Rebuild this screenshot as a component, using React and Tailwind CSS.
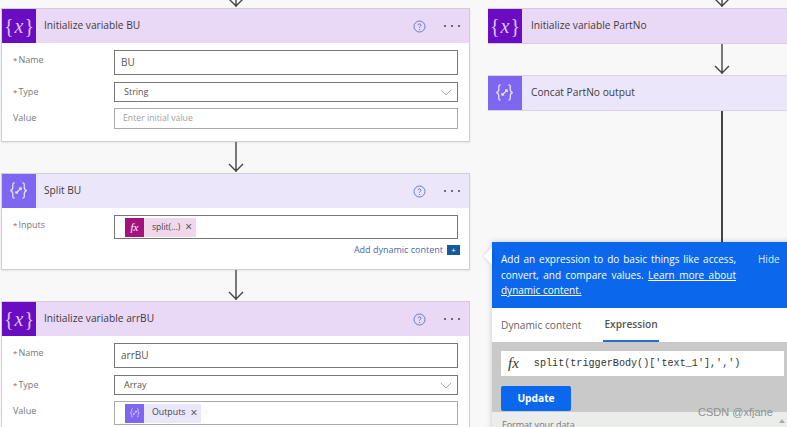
const F = { fontFamily: '"Open Sans", "Noto Sans", sans-serif' };
const SERIF = { fontFamily: '"Liberation Serif", serif' };

function Arrow({ h }) {
  return (
    <svg width="20" height={h} viewBox={`0 0 20 ${h}`} className="block mx-auto shrink-0">
      <path d={`M10 0V${h - 1}M3 ${h - 9}L10 ${h - 2}L17 ${h - 9}`} fill="none" stroke="#444" strokeWidth="1.4" />
    </svg>
  );
}

function VarIcon() {
  return (
    <div className="w-[34px] h-[34px] shrink-0 bg-[#6a0cc2] flex items-center justify-center">
      <span className="text-[#dcc6f2] text-[20px] leading-none" style={SERIF}>
        {"{"}<span className="italic mx-[1px]">x</span>{"}"}
      </span>
    </div>
  );
}

function ComposeIcon({ size = 34 }) {
  const s = size;
  return (
    <div className="shrink-0 bg-[#7f66f0] flex items-center justify-center" style={{ width: s, height: s }}>
      <svg width={s * 0.62} height={s * 0.62} viewBox="0 0 22 22" fill="none" stroke="#e4dcfb" strokeWidth="1.4">
        <path d="M7 3C4.500 3 5 5 5 7.500 5 9.500 4.500 10.500 2.500 11 4.500 11.500 5 12.500 5 14.500 5 17 4.500 19 7 19" />
        <path d="M15 3C17.500 3 17 5 17 7.500 17 9.500 17.500 10.500 19.500 11 17.500 11.500 17 12.500 17 14.500 17 17 17.500 19 15 19" />
        <path d="M8 14L14 8M14 8L11.500 8.500M14 8L13.500 10.500M8 14L10.500 13.500M8 14L8.500 11.500" />
      </svg>
    </div>
  );
}

function Header({ title, kind, actions = true, tx = 8 }) {
  const bg = kind === "var" ? "bg-[#e9d8f6]" : "bg-[#ece6fa]";
  return (
    <div className={`h-[34px] flex items-center ${bg}`}>
      {kind === "var" ? <VarIcon /> : <ComposeIcon />}
      <span className="text-[10.200px] text-[#3d3d3d]" style={{ marginLeft: tx }}>{title}</span>
      {actions && (
        <div className="ml-auto flex items-center">
          <svg width="13" height="13" viewBox="0 0 13 13" fill="none">
            <circle cx="6.500" cy="6.500" r="5.500" stroke="#5a6fc4" strokeWidth="0.9" />
            <path d="M5 5.200C5 3.400 8 3.400 8 5.200 8 6.300 6.500 6.300 6.500 7.700" stroke="#5a6fc4" strokeWidth="0.9" />
            <circle cx="6.500" cy="9.500" r="0.600" fill="#5a6fc4" />
          </svg>
          <div className="ml-[18px] mr-[9px] flex gap-[5px]">
            <span className="w-[2px] h-[2px] rounded-full bg-[#444]" />
            <span className="w-[2px] h-[2px] rounded-full bg-[#444]" />
            <span className="w-[2px] h-[2px] rounded-full bg-[#444]" />
          </div>
        </div>
      )}
    </div>
  );
}

function Row({ label, required, h, mt, dark, children }) {
  return (
    <div className="flex items-start" style={{ marginTop: mt }}>
      <div className="w-[112px] pl-[11px] pt-[2px] text-[9px] text-[#777] leading-[16px]">
        {required && <span className="text-[#b55] text-[8px] mr-[1px]">*</span>}{label}
      </div>
      <div
        className={`w-[344px] bg-white border flex items-center ${dark ? "border-[#777]" : "border-[#a9a9a9]"}`}
        style={{ height: h }}
      >
        {children}
      </div>
    </div>
  );
}

function Chevron() {
  return (
    <svg width="12" height="7" viewBox="0 0 12 7" className="ml-auto mr-[5px]" fill="none">
      <path d="M1 1L6 6L11 1" stroke="#aaa" strokeWidth="1" />
    </svg>
  );
}

function InitBU() {
  return (
    <div className="border border-[#cfcfcf] bg-white h-[134px] shadow-[0_1px_2px_rgba(0,0,0,0.08)]">
      <Header title="Initialize variable BU" kind="var" />
      <Row label="Name" required h={25} mt={7} dark><span className="ml-[6px] text-[10px] text-[#555]">BU</span></Row>
      <Row label="Type" required h={20} mt={7} dark>
        <span className="ml-[9px] text-[9px] text-[#555]">String</span><Chevron />
      </Row>
      <Row label="Value" h={21} mt={6}><span className="ml-[8px] text-[8.700px] text-[#a0a0a0]">Enter initial value</span></Row>
    </div>
  );
}

function SplitBU() {
  return (
    <div className="border border-[#cfcfcf] bg-white h-[97px] shadow-[0_1px_2px_rgba(0,0,0,0.08)]">
      <Header title="Split BU" kind="compose" />
      <Row label="Inputs" required h={24} mt={7} dark>
        <div className="ml-[10px] flex items-center h-[19px] bg-[#f0d8ec] pr-[4px]">
          <div className="w-[19px] h-[19px] bg-[#a3127f] flex items-center justify-center text-white text-[11px] italic" style={SERIF}>fx</div>
          <span className="ml-[8px] text-[8.500px] text-[#444]">split(...)</span>
          <span className="ml-[5px] text-[12px] leading-none text-[#444]">×</span>
        </div>
      </Row>
      <div className="flex items-center justify-end mt-[3px] mr-[9px] h-[16px]">
        <span className="text-[9px] text-[#4a68a8]">Add dynamic content</span>
        <span className="ml-[4px] w-[13px] h-[10px] bg-[#155a9c] flex items-center justify-center text-white text-[8px] leading-none">+</span>
      </div>
    </div>
  );
}

function InitArr() {
  return (
    <div className="border border-[#cfcfcf] bg-white h-[140px]">
      <Header title="Initialize variable arrBU" kind="var" />
      <Row label="Name" required h={25} mt={7} dark><span className="ml-[6px] text-[10px] text-[#555]">arrBU</span></Row>
      <Row label="Type" required h={20} mt={7} dark>
        <span className="ml-[9px] text-[9px] text-[#555]">Array</span><Chevron />
      </Row>
      <Row label="Value" h={24} mt={6}>
        <div className="ml-[10px] flex items-center h-[19px] bg-[#ebe7fa] pr-[4px]">
          <ComposeIcon size={19} />
          <span className="ml-[8px] text-[8.800px] text-[#444]">Outputs</span>
          <span className="ml-[5px] text-[12px] leading-none text-[#444]">×</span>
        </div>
      </Row>
    </div>
  );
}

function Panel() {
  return (
    <div className="relative ml-[4px] w-[320px] bg-white shadow-[0_0_6px_rgba(0,0,0,0.2)]">
      <div className="absolute left-[-8px] top-[5px] w-0 h-0 border-y-[9px] border-y-transparent border-r-[8px] border-r-white drop-shadow-[0_0_2px_rgba(0,0,0,0.15)]" />
      <div className="h-[66px] bg-[#0b68ec] flex items-start pl-[9px] pt-[10px] text-white text-[10px] leading-[15.500px]">
        <div className="w-[235px] text-justify">
          Add an expression to do basic things like access, convert, and compare values. <span className="underline">Learn more about dynamic content.</span>
        </div>
        <span className="ml-[22px] text-[#dce9fb]">Hide</span>
      </div>
      <div className="h-[34px] flex items-stretch pl-[9px] text-[10.200px]">
        <div className="flex items-center pt-[2px] text-[#666]">Dynamic content</div>
        <div className="ml-[22px] flex items-center pt-[2px] font-semibold text-[#555] border-b-2 border-[#2a6fc4] px-[1px]">Expression</div>
      </div>
      <div className="h-[70px] bg-[#c9c9c9] pt-[9px] pl-[9px]">
        <div className="w-[283px] h-[25px] bg-white flex items-center">
          <span className="ml-[7px] text-[15px] italic text-[#333]" style={SERIF}>fx</span>
          <span className="ml-[15px] text-[10.150px] text-[#333]" style={{ fontFamily: '"Liberation Mono", monospace' }}>split(triggerBody()['text_1'],',')</span>
        </div>
        <div className="mt-[10px] w-[70px] h-[25px] bg-[#0b68ec] rounded-[2px] flex items-center justify-center text-white text-[10.200px] font-bold">Update</div>
      </div>
      <div className="h-[20px] bg-[#ebedeb] pl-[10px] pt-[6px] text-[9px] text-[#777]">Format your data</div>
      <div className="absolute left-[287px] top-[177px] w-0 h-0 border-x-[3px] border-x-transparent border-b-[4px] border-b-[#aaa]" />
    </div>
  );
}

export default function App() {
  return (
    <div className="w-[787px] h-[427px] overflow-hidden bg-[#f8f8f8] relative flex items-start" style={F}>
      <div className="ml-[1px] w-[469px] flex flex-col items-stretch">
        <Arrow h={8} />
        <InitBU />
        <Arrow h={31} />
        <SplitBU />
        <Arrow h={31} />
        <InitArr />
      </div>
      <div className="ml-[18px] w-[299px] shrink-0 flex flex-col">
        <div className="w-[468px]"><Arrow h={8} /></div>
        <div className="w-[400px] border-y border-[#d8c8e6]"><Header title="Initialize variable PartNo" kind="var" actions={false} tx={9} /></div>
        <div className="w-[468px]"><Arrow h={31} /></div>
        <div className="w-[400px] border-y border-[#d8d2ee]"><Header title="Concat PartNo output" kind="compose" actions={false} tx={9} /></div>
        <div className="w-[468px] h-[131px] flex justify-center"><div className="w-[1.500px] h-full bg-[#444]" /></div>
        <Panel />
      </div>
      <span className="absolute left-[698px] top-[404px] text-[11px] text-[#909090]" style={{ fontFamily: '"Liberation Sans", sans-serif' }}>CSDN @xfjane</span>
    </div>
  );
}
